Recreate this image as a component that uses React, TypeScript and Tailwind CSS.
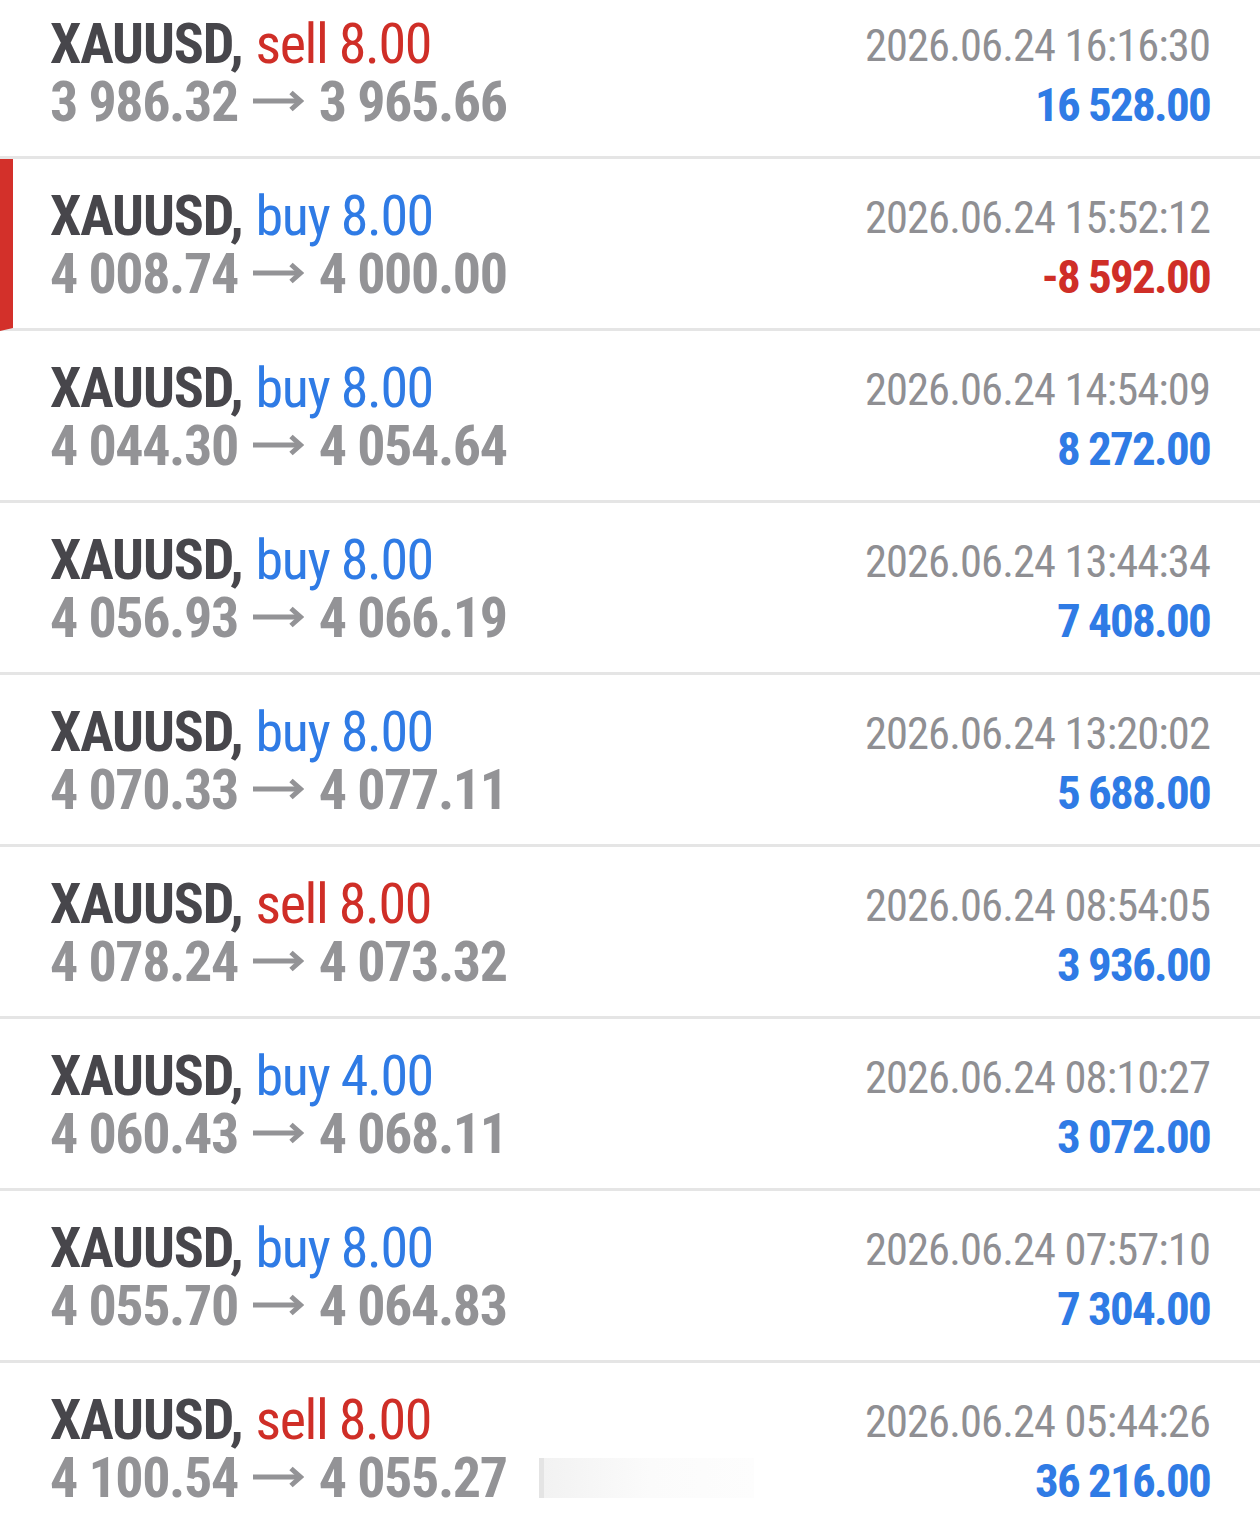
const DEALS = [
  { side: 'sell', vol: '8.00', open: '3 986.32', close: '3 965.66', time: '16:16:30', profit: '16 528.00' },
  { side: 'buy', vol: '8.00', open: '4 008.74', close: '4 000.00', time: '15:52:12', profit: '-8 592.00', active: true },
  { side: 'buy', vol: '8.00', open: '4 044.30', close: '4 054.64', time: '14:54:09', profit: '8 272.00' },
  { side: 'buy', vol: '8.00', open: '4 056.93', close: '4 066.19', time: '13:44:34', profit: '7 408.00' },
  { side: 'buy', vol: '8.00', open: '4 070.33', close: '4 077.11', time: '13:20:02', profit: '5 688.00' },
  { side: 'sell', vol: '8.00', open: '4 078.24', close: '4 073.32', time: '08:54:05', profit: '3 936.00' },
  { side: 'buy', vol: '4.00', open: '4 060.43', close: '4 068.11', time: '08:10:27', profit: '3 072.00' },
  { side: 'buy', vol: '8.00', open: '4 055.70', close: '4 064.83', time: '07:57:10', profit: '7 304.00' },
  { side: 'sell', vol: '8.00', open: '4 100.54', close: '4 055.27', time: '05:44:26', profit: '36 216.00', smudge: true },
]

function Arrow() {
  return (
    <svg width="52" height="22" viewBox="0 0 52 22" className="ml-[14px] mr-[15px] inline-block -mt-[2px]">
      <path d="M1 11 H48" stroke="#939396" strokeWidth="5" fill="none" />
      <path d="M39 2.5 L48.5 11 L39 19.5" stroke="#939396" strokeWidth="5" fill="none" />
    </svg>
  )
}

export default function App() {
  return (
    <div className="min-h-[1514px] overflow-hidden bg-white font-['Roboto',sans-serif] font-stretch-condensed">
      <div className="-mt-[13px]">
        {DEALS.map((d, i) => {
          const isSell = d.side === 'sell'
          const isLoss = d.profit.startsWith('-')
          return (
            <div
              key={i}
              className={
                'flex h-[172px] justify-between border-b-[3px] border-[#e5e5e5] pr-[50px] ' +
                (d.active ? 'border-l-[13px] border-l-[#d3302a] pl-[37px]' : 'pl-[50px]')
              }
            >
              {/* left: symbol + prices */}
              <div className="flex flex-col pt-[28px] text-[56px] leading-[58px]">
                <div className="whitespace-nowrap">
                  <span className="font-bold tracking-[-0.02em] text-[#47464b]">XAUUSD,</span>{' '}
                  <span className={'tracking-[-0.025em] ' + (isSell ? 'text-[#cf2e27]' : 'text-[#2f7be5]')}>
                    {d.side} {d.vol}
                  </span>
                </div>
                <div className="flex items-center whitespace-nowrap font-bold tracking-[-0.025em] text-[#939396]">
                  <span>{d.open}</span>
                  <Arrow />
                  <span>{d.close}</span>
                  {d.smudge && (
                    <span className="ml-[32px] inline-block h-[40px] w-[215px] border-l-[5px] border-[#e4e4e4] bg-gradient-to-r from-[#f2f2f2] via-[#fbfbfb] to-[#fdfdfd]" />
                  )}
                </div>
              </div>

              {/* right: time + profit */}
              <div className="flex flex-col items-end pt-[30px]">
                <div className="whitespace-nowrap text-[44.5px] leading-[58px] tracking-[-0.02em] text-[#8f8f93]">
                  2026.06.24 {d.time}
                </div>
                <div
                  className={
                    'whitespace-nowrap text-[47px] font-bold leading-[60px] tracking-[-0.037em] ' +
                    (isLoss ? 'text-[#cf2e27]' : 'text-[#2f7be5]')
                  }
                >
                  {d.profit}
                </div>
              </div>
            </div>
          )
        })}
      </div>
    </div>
  )
}
